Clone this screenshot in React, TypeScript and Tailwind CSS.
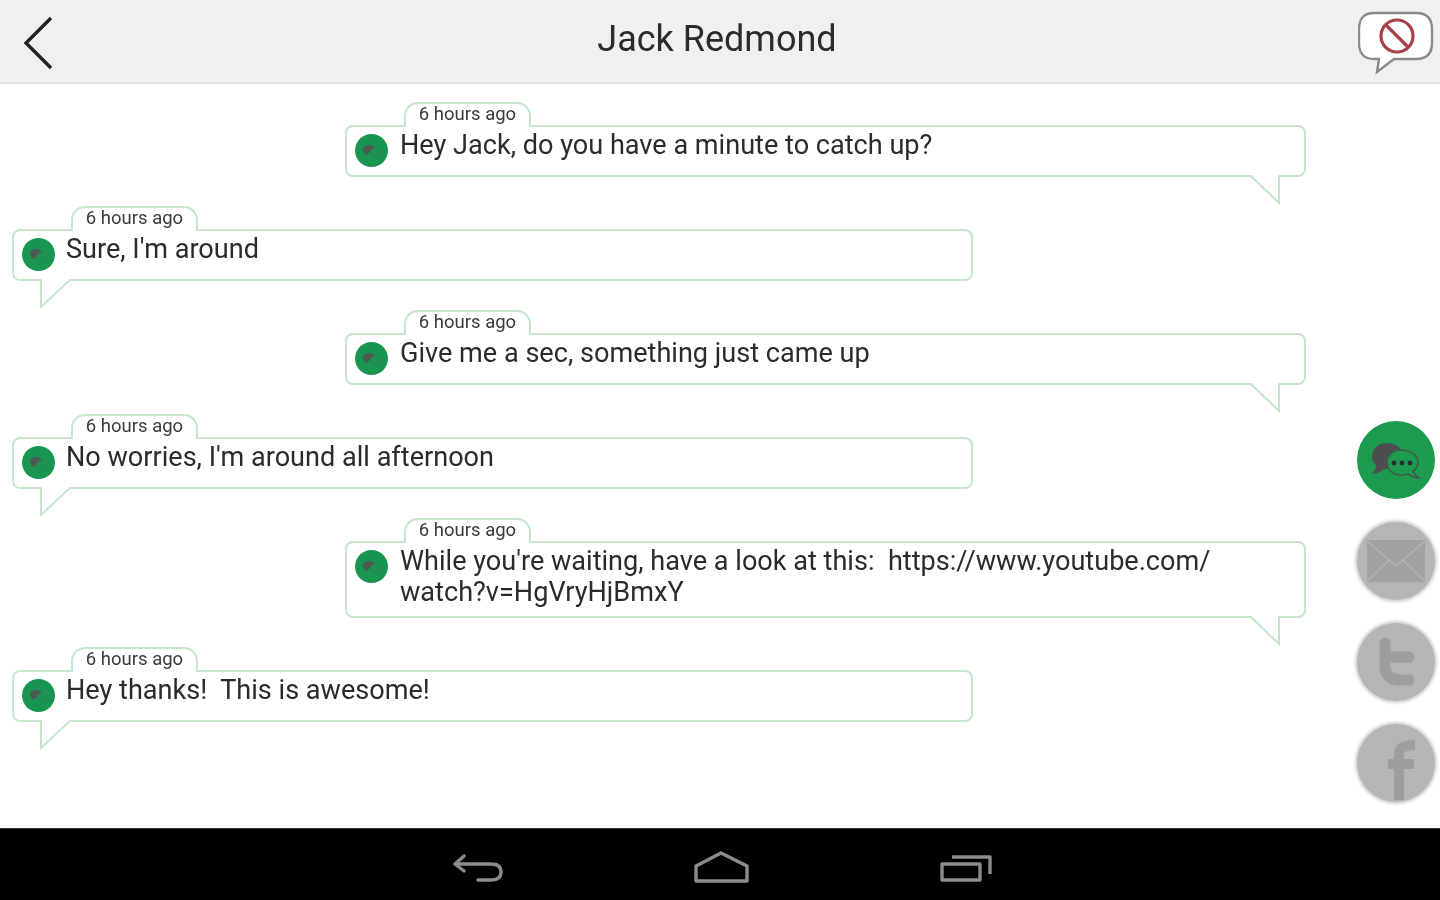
import React from "react";

interface Message {
  text: React.ReactNode;
  mine: boolean;
}

const messages: Message[] = [
  { text: "Hey Jack, do you have a minute to catch up?", mine: true },
  { text: "Sure, I'm around", mine: false },
  { text: "Give me a sec, something just came up", mine: true },
  { text: "No worries, I'm around all afternoon", mine: false },
  {
    text: (
      <>
        While you're waiting, have a look at this:&nbsp; https://www.youtube.com/
        <br />
        watch?v=HgVryHjBmxY
      </>
    ),
    mine: true,
  },
  { text: "Hey thanks!  This is awesome!", mine: false },
];

function ChatGlyph({ className }: { className?: string }) {
  return (
    <svg viewBox="0 0 52 40" className={className}>
      <path
        d="M2 17C2 8 9 3 17 3c6 0 11 2 14 7-8 0-14 5-14 12 0 3 1 5 2 7-3 0-6 0-8 2-3 2-6 3-9 3 2-2 4-5 4-9-3-2-4-5-4-8z"
        fill="#4d4d4f"
      />
      <path
        d="M31 10c9 0 17 5 17 12 0 4-2 7-5 9 1 3 3 5 6 7-4 0-8-2-11-4-2 1-5 1-7 1-9 0-14-6-14-13s6-12 14-12z"
        fill="#1c9a50"
        stroke="#3d5a48"
        strokeWidth="1.6"
      />
      <circle cx="24" cy="23" r="2.4" fill="#2b2b2b" />
      <circle cx="32" cy="23" r="2.4" fill="#2b2b2b" />
      <circle cx="40" cy="23" r="2.4" fill="#2b2b2b" />
    </svg>
  );
}

function Avatar() {
  return (
    <div className="w-[33px] h-[33px] shrink-0 rounded-full bg-[#189550] flex items-center justify-center">
      <svg viewBox="0 0 24 16" className="w-[22px] h-[15px]">
        <path d="M2 8c0-4 3-6 7-6 3 0 5 1 6 3-3 1-5 3-5 5l-2 1c-2 1-3 2-5 2 1-1 1-2 1-3-1-1-2-1-2-2z" fill="#4d5a52" />
        <path d="M15 6c4 0 7 2 7 4s-3 4-7 4-5-2-5-4 2-4 5-4z" fill="none" stroke="#3f7a58" strokeWidth="1" />
      </svg>
    </div>
  );
}

function Bubble({ text, mine }: Message) {
  return (
    <div className={`relative w-[961px] mb-[52px] ${mine ? "ml-[345px]" : "ml-[12px]"}`}>
      <div className="absolute -top-[23px] left-[59px] z-10 w-[127px] h-[25px] bg-white border-2 border-b-0 border-[#c6e6cb] rounded-t-[14px] text-center text-[18.5px] leading-[21px] text-[#3a3a3a]">
        6 hours ago
      </div>
      <div
        className={`min-h-[52px] bg-white border-2 border-[#c6e6cb] rounded-[8px] pl-[8px] pr-4 pt-[3px] pb-[8px] flex ${
          mine ? "gap-[12px]" : "gap-[11px]"
        }`}
      >
        <div className="pt-[4px]">
          <Avatar />
        </div>
        <p className="text-[27.1px] leading-[31px] text-[#2b2b2b] whitespace-pre-wrap">{text}</p>
      </div>
      {mine ? (
        <svg viewBox="0 0 32 30" className="absolute top-full right-[24px] -mt-[2px] w-[32px] h-[30px]">
          <path d="M0 0 L29 28 L29 0" fill="#fff" stroke="#c6e6cb" strokeWidth="2" />
        </svg>
      ) : (
        <svg viewBox="0 0 34 30" className="absolute top-full left-[27px] -mt-[2px] w-[34px] h-[30px]">
          <path d="M2 0 L2 28 L32 0" fill="#fff" stroke="#c6e6cb" strokeWidth="2" />
        </svg>
      )}
    </div>
  );
}

function SideButton({ children, active }: { children: React.ReactNode; active?: boolean }) {
  return (
    <div
      className={`w-[78px] h-[78px] rounded-full flex items-center justify-center overflow-hidden ${
        active ? "bg-[#1c9a50]" : "bg-[#b5b5b5] shadow-[0_0_3px_2px_#d0d0d0]"
      }`}
    >
      {children}
    </div>
  );
}

export default function App() {
  return (
    <div className="w-[1440px] h-[900px] flex flex-col bg-white overflow-hidden blur-[0.7px] font-['Roboto',sans-serif]">
      <header className="h-[84px] shrink-0 bg-[#f0f0f0] border-b-2 border-[#e2e2e2] flex items-center">
        <div className="w-[96px] pl-[21px] pt-[4px]">
          <svg viewBox="0 0 36 56" className="w-[36px] h-[56px]" fill="none" stroke="#222" strokeWidth="3.4">
            <path d="M30 3 L5 28 L30 53" />
          </svg>
        </div>
        <h1 className="flex-1 text-center text-[36px] leading-[44px] text-[#2b2b2b] -mt-[4px] pr-[6px]">Jack Redmond</h1>
        <div className="w-[96px] flex justify-end pr-[6px] pt-[4px]">
          <svg viewBox="0 0 76 64" className="w-[76px] h-[64px]">
            <path
              d="M16 2 H58 Q74 2 74 18 V32 Q74 48 58 48 H36 L19 61 L21 48 H16 Q1 48 1 32 V18 Q1 2 16 2 Z"
              fill="#fff"
              stroke="#8a8a8a"
              strokeWidth="2.4"
            />
            <circle cx="39" cy="25" r="16" fill="none" stroke="#a8404a" strokeWidth="3.2" />
            <path d="M28 14 L50 36" stroke="#a8404a" strokeWidth="3.2" />
          </svg>
        </div>
      </header>

      <main className="flex-1 flex min-h-0">
        <div className="w-[1352px] pt-[41px]">
          {messages.map((m, i) => (
            <Bubble key={i} text={m.text} mine={m.mine} />
          ))}
        </div>
        <div className="flex-1 pl-[5px] pt-[337px] flex flex-col gap-[23px]">
          <SideButton active>
            <ChatGlyph className="w-[52px] h-[40px]" />
          </SideButton>
          <SideButton>
            <svg viewBox="0 0 58 42" className="w-[58px] h-[42px]">
              <rect width="58" height="42" fill="#a2a2a2" />
              <path d="M0 1 L29 26 L58 1 M0 41 L22 20 M58 41 L36 20" fill="none" stroke="#b5b5b5" strokeWidth="1.4" />
            </svg>
          </SideButton>
          <SideButton>
            <svg viewBox="0 0 78 78" className="w-[78px] h-[78px]">
              <path
                d="M28 20 V42 Q28 57 43 57 H52 M28 34 H52"
                fill="none"
                stroke="#9e9e9e"
                strokeWidth="11"
                strokeLinecap="round"
                strokeLinejoin="round"
              />
            </svg>
          </SideButton>
          <SideButton>
            <svg viewBox="0 0 78 78" className="w-[78px] h-[78px]">
              <path d="M42 76 V30 Q42 21 58 21 M31 40 H57" fill="none" stroke="#9e9e9e" strokeWidth="10" />
            </svg>
          </SideButton>
        </div>
      </main>

      <nav className="h-[72px] shrink-0 bg-black border-t border-[#333] flex items-center justify-center gap-[191px] pl-[4px]">
        <svg viewBox="0 0 50 28" className="w-[50px] h-[28px] mt-[6px]" fill="none" stroke="#8c8c8c" strokeWidth="3.4" strokeLinecap="round" strokeLinejoin="round">
          <path d="M11 2 L2 10 L11 17 M2 10 H38 Q48 10 48 18 Q48 26 38 26 H25" />
        </svg>
        <svg viewBox="0 0 55 32" className="w-[55px] h-[32px] mt-[4px]" fill="none" stroke="#8c8c8c" strokeWidth="3.4" strokeLinejoin="round">
          <path d="M2 30 V15 L27 2 L53 15 V30 Z" />
        </svg>
        <svg viewBox="0 0 52 28" className="w-[52px] h-[28px] mt-[6px]" fill="none" stroke="#8c8c8c" strokeWidth="3.4" strokeLinejoin="round">
          <path d="M2 10 H40 V26 H2 Z M12 3 H50 V20" />
        </svg>
      </nav>
    </div>
  );
}
